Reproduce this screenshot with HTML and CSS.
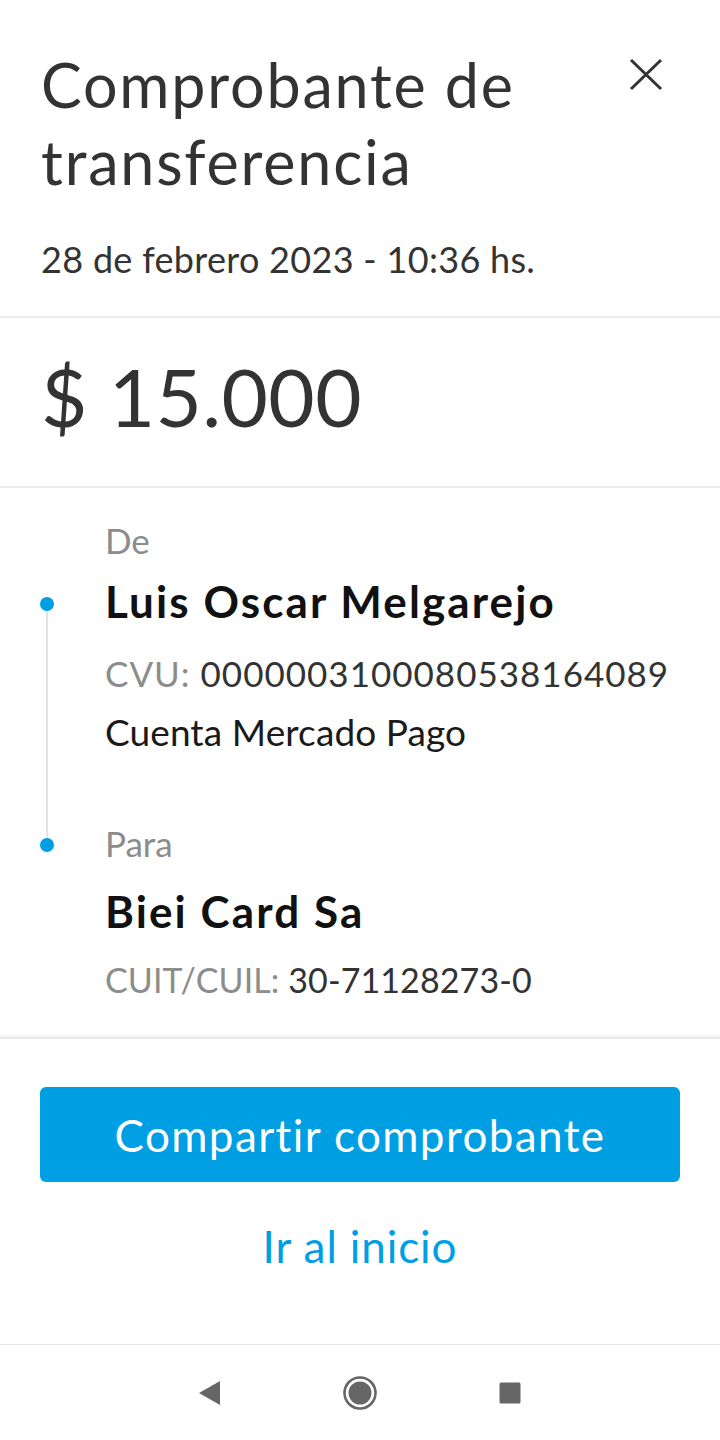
FILE: index.html
```html
<!DOCTYPE html>
<html lang="es">
<head>
<meta charset="utf-8">
<title>Comprobante de transferencia</title>
<link rel="stylesheet" href="styles.css">
</head>
<body>
<div class="screen">
  <header class="header">
    <div class="title-row">
      <h1 class="title">Comprobante de transferencia</h1>
      <button class="close" aria-label="Cerrar">
        <svg width="34" height="34" viewBox="0 0 34 34"><path d="M2 2 L32 31 M32 2 L2 31" stroke="#333" stroke-width="3" fill="none"/></svg>
      </button>
    </div>
    <p class="date">28 de febrero 2023 - 10:36 hs.</p>
  </header>

  <section class="amount-section">
    <div class="amount">$ 15.000</div>
  </section>

  <section class="details">
    <div class="party party-from">
      <div class="label">De</div>
      <div class="name"><span class="dot"></span>Luis Oscar Melgarejo</div>
      <div class="info cvu"><span class="muted">CVU: </span>0000003100080538164089</div>
      <div class="info dark">Cuenta Mercado Pago</div>
    </div>
    <div class="party party-to">
      <div class="label"><span class="dot"></span>Para</div>
      <div class="name">Biei Card Sa</div>
      <div class="info cuit"><span class="muted">CUIT/CUIL: </span>30-71128273-0</div>
    </div>
  </section>

  <footer class="actions">
    <button class="btn-primary">Compartir comprobante</button>
    <button class="btn-link">Ir al inicio</button>
  </footer>

  <nav class="navbar">
    <div class="nav-item">
      <svg width="24" height="26" viewBox="0 0 24 26"><path d="M22 1 L1 13 L22 25 Z" fill="#666"/></svg>
    </div>
    <div class="nav-item">
      <svg width="36" height="36" viewBox="0 0 36 36"><circle cx="18" cy="18" r="15.5" fill="none" stroke="#666" stroke-width="2.6"/><circle cx="18" cy="18" r="11.5" fill="#666"/></svg>
    </div>
    <div class="nav-item">
      <svg width="22" height="22" viewBox="0 0 22 22"><rect x="0.5" y="0.5" width="21" height="21" rx="1.5" fill="#666"/></svg>
    </div>
  </nav>
</div>
</body>
</html>
```
FILE: styles.css
```css
* { box-sizing: border-box; }
html, body { margin: 0; padding: 0; background: #fff; }
body {
  font-family: "Lato", "Open Sans", sans-serif;
  color: #333;
}
.screen {
  width: 720px;
  height: 1440px;
  display: flex;
  flex-direction: column;
}
.header {
  padding: 46px 41px 37px 41px;
  border-bottom: 2px solid #ececec;
}
.title-row {
  display: flex;
  justify-content: space-between;
  align-items: flex-start;
}
.title {
  margin: 0;
  font-size: 61px;
  line-height: 77px;
  font-weight: 400;
  letter-spacing: 1.8px;
  color: #333;
  width: 540px;
}
.close {
  border: 0;
  background: none;
  padding: 0;
  margin: 12px 16px 0 0;
  width: 34px;
  height: 34px;
}
.close svg { display: block; }
.date {
  margin: 39px 0 0 0;
  font-size: 36px;
  line-height: 40px;
  letter-spacing: 0.3px;
  color: #333;
}
.amount-section {
  padding: 38px 41px 50px 41px;
  border-bottom: 2px solid #ececec;
}
.amount {
  font-size: 80px;
  line-height: 80px;
  letter-spacing: 0.4px;
  color: #333;
}
.details {
  padding: 32px 0 37px 105px;
  flex: 0 0 auto;
}
.party { position: relative; }
.label {
  position: relative;
  font-size: 35px;
  line-height: 40px;
  color: #8c8c8c;
}
.name {
  position: relative;
  margin-top: 17px;
  font-size: 44px;
  line-height: 48px;
  font-weight: 700;
  letter-spacing: 2.1px;
  color: #111;
}
.party-to .name { margin-top: 24px; }
.info {
  margin-top: 25px;
  font-size: 35px;
  line-height: 40px;
  color: #333;
}
.info.cvu { margin-top: 28px; letter-spacing: 1px; }
.info.cuit { font-size: 34px; letter-spacing: 0.1px; }
.info.dark { color: #1a1a1a; margin-top: 19px; font-size: 37px; letter-spacing: 0.1px; }
.muted { color: #8c8c8c; }
.party-to { margin-top: 71px; }
.dot {
  position: absolute;
  left: -65px;
  width: 14px;
  height: 14px;
  border-radius: 50%;
  background: #009ee3;
  z-index: 1;
}
.name .dot { top: 20px; }
.label .dot { top: 15px; }
.party-from .name::before {
  content: "";
  position: absolute;
  left: -59px;
  top: 27px;
  width: 2px;
  height: 241px;
  background: #e3e3e3;
}
.actions {
  border-top: 2px solid #e8e8e8;
  box-shadow: 0 -2px 3px rgba(0,0,0,0.05);
  padding: 48px 40px 0 40px;
  display: flex;
  flex-direction: column;
  flex: 1 1 auto;
}
.btn-primary {
  height: 95px;
  border: 0;
  border-radius: 6px;
  background: #009ee3;
  color: #fff;
  font-family: inherit;
  font-size: 44px;
  letter-spacing: 1.4px;
  padding: 0;
}
.btn-link {
  margin-top: 16px;
  height: 96px;
  border: 0;
  background: none;
  color: #009ee3;
  font-family: inherit;
  font-size: 44px;
  letter-spacing: 0.9px;
  padding: 0;
}
.navbar {
  height: 96px;
  flex: 0 0 96px;
  border-top: 1px solid #e6e6e6;
  display: flex;
  justify-content: center;
  align-items: center;
}
.nav-item {
  width: 150px;
  display: flex;
  justify-content: center;
  align-items: center;
}
.nav-item svg { display: block; }
```
